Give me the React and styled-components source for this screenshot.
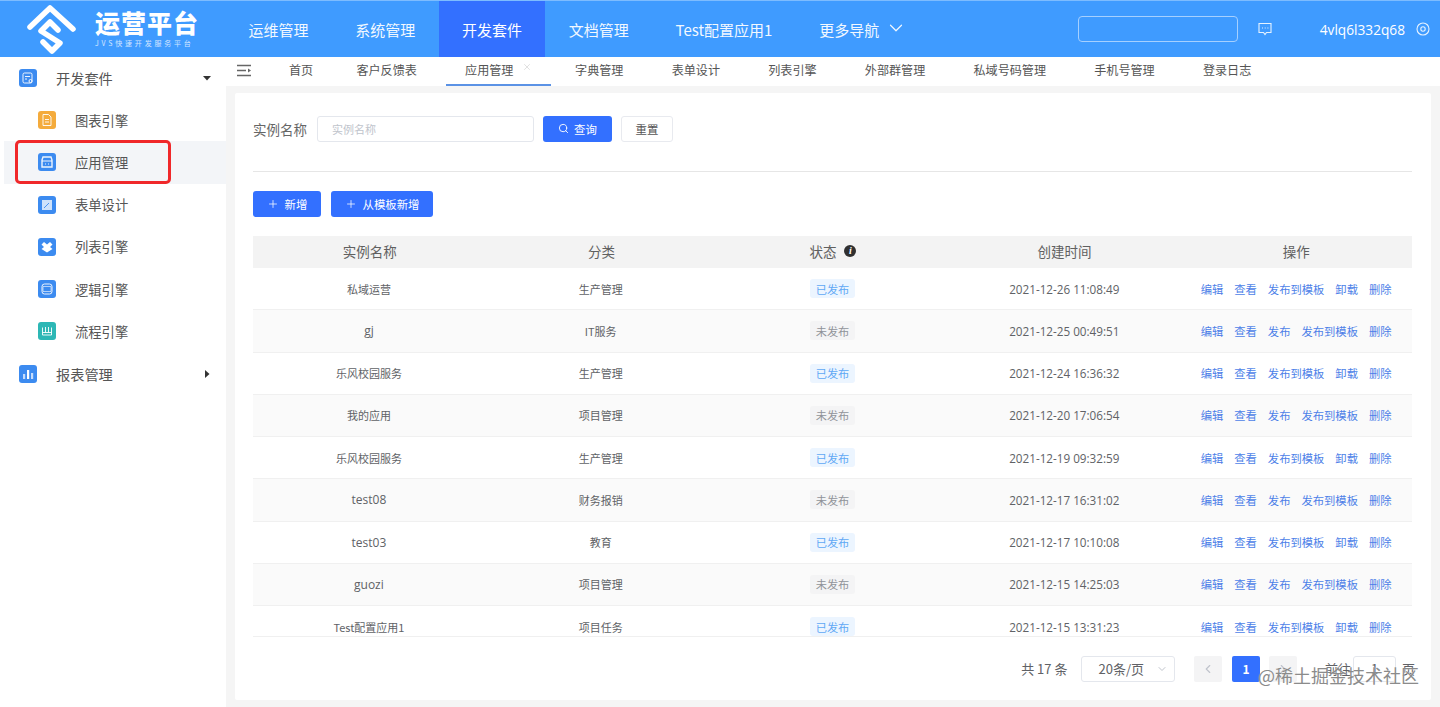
import React from 'react';
import styled, { createGlobalStyle } from 'styled-components';
import { ChevronDown, ChevronLeft, ChevronRight, Plus, Search, X } from 'lucide-react';

const GlobalStyle = createGlobalStyle`
    html, body {
        margin: 0;
        padding: 0;
        height: 707px;
        overflow: hidden;
        background: #f5f5f5;
        font-family: "Noto Sans CJK SC", "Noto Sans", sans-serif;
        color: #606266;
    }
    * {
        box-sizing: border-box;
    }
`;

const Page = styled.div`
    position: relative;
    width: 1440px;
    height: 707px;
    display: flex;
    flex-direction: column;
    overflow: hidden;
`;

const Header = styled.header`
    height: 57px;
    flex: none;
    display: flex;
    align-items: stretch;
    background: #3f9bff;
    border-top: 1px solid #7dbcff;
    color: #fff;
`;

const Brand = styled.div`
    width: 225px;
    flex: none;
    display: flex;
    align-items: center;
    padding-left: 24px;
    gap: 15px;
`;

const BrandText = styled.div`
    display: flex;
    flex-direction: column;
    align-items: flex-start;
`;

const BrandTitle = styled.div`
    font-size: 25px;
    line-height: 28px;
    font-weight: 900;
    letter-spacing: 1px;
    margin-top: -3px;
`;

const BrandSub = styled.div`
    font-size: 7px;
    line-height: 9px;
    letter-spacing: 2.8px;
    margin-top: 3px;
    opacity: .75;
    white-space: nowrap;
`;

const Nav = styled.nav`
    display: flex;
    flex: 1;
`;

const NavItem = styled.div`
    display: flex;
    align-items: center;
    gap: 10px;
    padding: 0 23.4px;
    font-size: 15px;
    white-space: nowrap;
    background: ${p => (p.$active ? '#3370ff' : 'transparent')};
    color: ${p => (p.$active ? '#fff' : '#f2f8ff')};
`;

const NavChevron = styled(ChevronDown)`
    margin: -3px 0 0 -4px;
`;

const TopRight = styled.div`
    display: flex;
    align-items: center;
    padding-right: 9px;
`;

const TopSearch = styled.div`
    width: 160px;
    height: 26px;
    border: 1px solid #a6d0ff;
    border-radius: 4px;
    margin-right: 19px;
`;

const UserName = styled.span`
    font-family: "Open Sans", "Noto Sans", sans-serif;
    font-size: 13.7px;
    margin-left: 47px;
    margin-right: 10px;
`;

const Body = styled.div`
    flex: 1;
    display: flex;
    min-height: 0;
`;

const Sidebar = styled.aside`
    position: relative;
    width: 226px;
    flex: none;
    background: #fff;
`;

const MenuHead = styled.div`
    height: 42.2px;
    display: flex;
    align-items: center;
    padding: 0 14px 0 19px;
    font-size: 14.2px;
    color: #555;
`;

const MenuLabel = styled.span`
    margin-left: 19px;
    flex: 1;
`;

const SubMenu = styled.div`
    padding-bottom: 1px;
`;

const MenuItem = styled.div`
    height: 42.2px;
    margin-left: 4px;
    padding-left: 34px;
    display: flex;
    align-items: center;
    font-size: 13.3px;
    color: #555;
    background: ${p => (p.$active ? '#f3f5f8' : 'transparent')};
`;

const IconBox = styled.span`
    width: 18px;
    height: 18px;
    flex: none;
    border-radius: 3px;
    background: ${p => p.$bg || '#3c8bf0'};
    display: flex;
    align-items: center;
    justify-content: center;
`;

const Highlight = styled.div`
    position: absolute;
    left: 15px;
    top: 83px;
    width: 156px;
    height: 44px;
    border: 3px solid #f0282a;
    border-radius: 5px;
`;

const Main = styled.main`
    flex: 1;
    min-width: 0;
    display: flex;
    flex-direction: column;
`;

const TabBar = styled.div`
    height: 29px;
    flex: none;
    display: flex;
    align-items: stretch;
    background: #fff;
    font-size: 12.1px;
    color: #555;
`;

const Collapse = styled.div`
    width: 39px;
    display: flex;
    align-items: center;
    padding: 0 0 3px 10px;
`;

const Tab = styled.div`
    display: flex;
    align-items: center;
    justify-content: flex-start;
    gap: 9px;
    padding: ${p => (p.$active ? '0 18.6px 3px 19px' : '0 24.2px 3px 24px')};
    margin-left: ${p => p.$shift || 0}px;
    margin-right: ${p => p.$pull || 0}px;
    white-space: nowrap;
    border-bottom: 2px solid ${p => (p.$active ? '#5b92e5' : 'transparent')};
`;

const Content = styled.div`
    flex: 1;
    min-height: 0;
    padding: 7px 9px 7px 9px;
`;

const Card = styled.section`
    height: 100%;
    background: #fff;
    border-radius: 2px;
    padding: 0 19px 0 18px;
    display: flex;
    flex-direction: column;
`;

const FilterRow = styled.div`
    height: 79px;
    flex: none;
    display: flex;
    align-items: center;
    border-bottom: 1px solid #e6e6e6;
    padding-bottom: 7px;
`;

const FilterLabel = styled.span`
    font-size: 13.5px;
    color: #666;
    width: 64px;
`;

const TextInput = styled.div`
    width: 217px;
    height: 26px;
    border: 1px solid #e4e7ed;
    border-radius: 3px;
    padding-left: 14px;
    display: flex;
    align-items: center;
    font-size: 11px;
    color: #c0c4cc;
    margin-right: 9px;
`;

const PrimaryButton = styled.button`
    height: 26px;
    border: 0;
    border-radius: 3px;
    background: #3370ff;
    color: #fff;
    font: inherit;
    font-size: 11.4px;
    display: inline-flex;
    align-items: center;
    justify-content: center;
    gap: ${p => p.$gap || 5}px;
    width: ${p => p.$width}px;
    padding: 0;
`;

const GhostButton = styled.button`
    width: 52px;
    height: 26px;
    margin-left: 9px;
    border: 1px solid #e8eaef;
    border-radius: 3px;
    background: #fff;
    color: #555;
    font: inherit;
    font-size: 11.4px;
    padding: 0;
`;

const ActionRow = styled.div`
    flex: none;
    display: flex;
    gap: 10px;
    padding: 19px 0 19px;
`;

const TableClip = styled.div`
    height: 401px;
    flex: none;
    overflow: hidden;
    border-bottom: 1px solid #f0f0f0;
`;

const GridRow = styled.div`
    display: grid;
    grid-template-columns: repeat(5, 1fr);
    align-items: center;
    justify-items: center;
`;

const HeadRow = styled(GridRow)`
    height: 32px;
    padding: 0 0 2px 1px;
    background: #f3f3f3;
    font-size: 13.5px;
    color: #606060;
`;

const DataRow = styled(GridRow)`
    height: 42.25px;
    font-size: 11px;
    color: #606266;
    border-bottom: 1px solid #f0f0f0;
    background: ${p => (p.$striped ? '#fafafa' : '#fff')};
`;

const StatusHead = styled.span`
    display: inline-flex;
    align-items: center;
    gap: 8px;
`;

const InfoDot = styled.span`
    width: 12px;
    height: 12px;
    border-radius: 50%;
    background: #303030;
    color: #fff;
    font-family: "Liberation Serif", serif;
    font-style: italic;
    font-weight: 700;
    font-size: 10px;
    line-height: 12px;
    text-align: center;
`;

const Latin = styled.span`
    font-family: "Open Sans", "Noto Sans", sans-serif;
    font-size: ${p => p.$size || 11.7}px;
`;

const StatusTag = styled.span`
    height: 19px;
    padding: 0 6px;
    display: inline-flex;
    align-items: center;
    border-radius: 3px;
    font-size: 11.2px;
    background: ${p => (p.$published ? '#ecf5ff' : '#f4f4f5')};
    color: ${p => (p.$published ? '#5fa8f5' : '#909399')};
`;

const Ops = styled.div`
    display: flex;
    gap: 11px;
    font-size: 11.3px;
    color: #4d7fe8;
    white-space: nowrap;
`;

const Pager = styled.div`
    flex: 1;
    display: flex;
    align-items: center;
    justify-content: flex-end;
    margin-right: -3px;
    font-size: 13px;
    color: #606266;
`;

const PageSize = styled.div`
    width: 94px;
    height: 26px;
    margin: 0 19px 0 14px;
    border: 1px solid #e4e7ed;
    border-radius: 3px;
    display: flex;
    align-items: center;
    justify-content: space-between;
    padding: 0 6px 0 16px;
`;

const PageButton = styled.div`
    width: 28px;
    height: 26px;
    border-radius: 2px;
    margin-right: 9.5px;
    display: flex;
    align-items: center;
    justify-content: center;
    font-size: 12px;
    font-weight: 700;
    background: ${p => (p.$active ? '#3370ff' : '#f4f4f5')};
    color: ${p => (p.$active ? '#fff' : '#c0c4cc')};
`;

const JumpLabel = styled.span`
    margin-left: 18px;
`;

const JumpInput = styled.div`
    width: 43px;
    height: 26px;
    margin: 0 6px 0 2px;
    border: 1px solid #e4e7ed;
    border-radius: 3px;
    display: flex;
    align-items: center;
    justify-content: center;
`;

const Watermark = styled.div`
    position: absolute;
    left: 1258px;
    top: 662px;
    font-size: 18px;
    line-height: 26px;
    color: #8b8b8b;
    white-space: nowrap;
    text-shadow: 0 0 1px rgba(255, 255, 255, .8);
`;

const Logo = () => (
    <svg width="56" height="54" viewBox="24 2 56 54" fill="none" stroke="#fff" strokeWidth="5.5" strokeLinecap="round" strokeLinejoin="round" style={{ flex: 'none' }}>
        <path d="M30 27 L50 8 L73 29" />
        <path d="M58 30 L50 22 L41 31 L60 43 L52 51 L43 42" />
    </svg>
);

const glyphs = {
    kit: <><rect x="4" y="4" width="9" height="10" rx="1.5" /><path d="M6 7.5h5M6 10h2" /><circle cx="11.5" cy="12" r="1.5" /></>,
    chart: <><path d="M5 3.5h5.5L13 6v8.5H5z" /><path d="M7 8.5h4M7 11h4" /></>,
    app: <><path d="M4 7l1-3h8l1 3v7H4z" strokeWidth="1.4" /><path d="M4 8h10M7 11h1M10 11h1" /></>,
    form: <><rect x="4" y="4" width="10" height="10" fill="#fff" fillOpacity=".75" stroke="none" /><path d="M6 12l5-5" stroke="#3c8bf0" /></>,
    list: <path d="M9 6.5L6 4 3.5 6.5 6 9 3.5 11 9 14.5 14.5 11 12 9l2.5-2.5L12 4z" fill="#fff" stroke="none" />,
    logic: <><rect x="4" y="4" width="10" height="10" rx="2.5" /><path d="M5 6.5h8v5H5z" strokeOpacity=".6" /></>,
    flow: <><path d="M4.5 5.5v7.5h9V5.5" /><path d="M7.5 10.5V5M10.5 10.5V5" /><path d="M4.5 10.5h9" /></>,
    report: <><rect x="4" y="9" width="2.2" height="5" fill="#fff" stroke="none" opacity=".7" /><rect x="8" y="5" width="2.2" height="9" fill="#fff" stroke="none" /><rect x="12" y="8" width="2.2" height="6" fill="#fff" stroke="none" opacity=".7" /></>,
};

const MenuIcon = ({ name, bg }) => (
    <IconBox $bg={bg}>
        <svg width="18" height="18" viewBox="0 0 18 18" fill="none" stroke="#fff" strokeWidth="1" strokeOpacity=".9">
            {glyphs[name]}
        </svg>
    </IconBox>
);

const Caret = ({ open }) => (
    <svg width="10" height="10" viewBox="0 0 10 10" fill="#333">
        {open ? <path d="M1 3h8L5 7.5z" /> : <path d="M3 1v8l4.5-4z" />}
    </svg>
);

const navItems = ['运维管理', '系统管理', '开发套件', '文档管理', 'Test配置应用1'];
const subMenu = [
    ['chart', '图表引擎', '#f4ab3c'],
    ['app', '应用管理'],
    ['form', '表单设计'],
    ['list', '列表引擎'],
    ['logic', '逻辑引擎'],
    ['flow', '流程引擎', '#2db7b5'],
];
const tabs = ['字典管理', '表单设计', '列表引擎', '外部群管理', '私域号码管理', '手机号管理', '登录日志'];

const rows = [
    ['私域运营', '生产管理', true, '2021-12-26 11:08:49'],
    ['gj', 'IT服务', false, '2021-12-25 00:49:51'],
    ['乐风校园服务', '生产管理', true, '2021-12-24 16:36:32'],
    ['我的应用', '项目管理', false, '2021-12-20 17:06:54'],
    ['乐风校园服务', '生产管理', true, '2021-12-19 09:32:59'],
    ['test08', '财务报销', false, '2021-12-17 16:31:02'],
    ['test03', '教育', true, '2021-12-17 10:10:08'],
    ['guozi', '项目管理', false, '2021-12-15 14:25:03'],
    ['Test配置应用1', '项目任务', true, '2021-12-15 13:31:23'],
];

export default function App() {
    return (
        <Page>
            <GlobalStyle />
            <Header>
                <Brand>
                    <Logo />
                    <BrandText>
                        <BrandTitle>运营平台</BrandTitle>
                        <BrandSub>JVS快速开发服务平台</BrandSub>
                    </BrandText>
                </Brand>
                <Nav>
                    {navItems.map(item => (
                        <NavItem key={item} $active={item === '开发套件'}>{item}</NavItem>
                    ))}
                    <NavItem>更多导航 <NavChevron size={22} strokeWidth={1.3} /></NavItem>
                </Nav>
                <TopRight>
                    <TopSearch />
                    <svg width="16" height="16" viewBox="0 0 16 16" fill="none" stroke="#e6f2ff" strokeWidth="1.1">
                        <path d="M2 2.5h12v9H9.5L8 13.5 6.5 11.5H2z" />
                        <path d="M5 7h1M7.7 7h1M10.4 7h1" />
                    </svg>
                    <UserName>4vlq6l332q68</UserName>
                    <svg width="16" height="16" viewBox="0 0 16 16" fill="none" stroke="#e6f2ff" strokeWidth="1.1">
                        <circle cx="8" cy="8" r="6" />
                        <circle cx="8" cy="8" r="2.2" />
                    </svg>
                </TopRight>
            </Header>
            <Body>
                <Sidebar>
                    <MenuHead>
                        <MenuIcon name="kit" />
                        <MenuLabel>开发套件</MenuLabel>
                        <Caret open />
                    </MenuHead>
                    <SubMenu>
                        {subMenu.map(([icon, label, bg]) => (
                            <MenuItem key={label} $active={label === '应用管理'}>
                                <MenuIcon name={icon} bg={bg} />
                                <MenuLabel>{label}</MenuLabel>
                            </MenuItem>
                        ))}
                    </SubMenu>
                    <MenuHead>
                        <MenuIcon name="report" />
                        <MenuLabel>报表管理</MenuLabel>
                        <Caret />
                    </MenuHead>
                    <Highlight />
                </Sidebar>
                <Main>
                    <TabBar>
                        <Collapse>
                            <svg width="16" height="13" viewBox="0 0 16 13" fill="none" stroke="#666" strokeWidth="1.6">
                                <path d="M1 1.5h14M1 6.5h9M1 11.5h14" />
                                <path d="M12 4.5l3 2-3 2z" fill="#666" stroke="none" />
                            </svg>
                        </Collapse>
                        <Tab $pull={-5}>首页</Tab>
                        <Tab>客户反馈表</Tab>
                        <Tab $active $shift={5}>应用管理 <X size={10} strokeWidth={1} color="#b5b5b5" style={{ marginBottom: 4 }} /></Tab>
                        {tabs.map(tab => <Tab key={tab}>{tab}</Tab>)}
                    </TabBar>
                    <Content>
                        <Card>
                            <FilterRow>
                                <FilterLabel>实例名称</FilterLabel>
                                <TextInput>实例名称</TextInput>
                                <PrimaryButton $width={69}><Search size={11} />查询</PrimaryButton>
                                <GhostButton>重置</GhostButton>
                            </FilterRow>
                            <ActionRow>
                                <PrimaryButton $width={68} $gap={6}><Plus size={12} strokeWidth={1.5} />新增</PrimaryButton>
                                <PrimaryButton $width={102} $gap={6}><Plus size={12} strokeWidth={1.5} />从模板新增</PrimaryButton>
                            </ActionRow>
                            <TableClip>
                                <HeadRow>
                                    <span>实例名称</span>
                                    <span>分类</span>
                                    <StatusHead>状态 <InfoDot>i</InfoDot></StatusHead>
                                    <span>创建时间</span>
                                    <span>操作</span>
                                </HeadRow>
                                {rows.map(([name, category, published, created], i) => (
                                    <DataRow key={created} $striped={i % 2 === 1}>
                                        {/^[a-z0-9]+$/i.test(name) ? <Latin $size={12}>{name}</Latin> : <span>{name}</span>}
                                        <span>{category}</span>
                                        <StatusTag $published={published}>{published ? '已发布' : '未发布'}</StatusTag>
                                        <Latin>{created}</Latin>
                                        <Ops>
                                            <span>编辑</span>
                                            <span>查看</span>
                                            {published
                                                ? <><span>发布到模板</span><span>卸载</span></>
                                                : <><span>发布</span><span>发布到模板</span></>}
                                            <span>删除</span>
                                        </Ops>
                                    </DataRow>
                                ))}
                            </TableClip>
                            <Pager>
                                共 17 条
                                <PageSize>20条/页 <ChevronDown size={12} color="#c0c4cc" /></PageSize>
                                <PageButton><ChevronLeft size={14} /></PageButton>
                                <PageButton $active>1</PageButton>
                                <PageButton><ChevronRight size={14} /></PageButton>
                                <JumpLabel>前往</JumpLabel>
                                <JumpInput>1</JumpInput>
                                页
                            </Pager>
                        </Card>
                    </Content>
                </Main>
            </Body>
            <Watermark>@稀土掘金技术社区</Watermark>
        </Page>
    );
}
